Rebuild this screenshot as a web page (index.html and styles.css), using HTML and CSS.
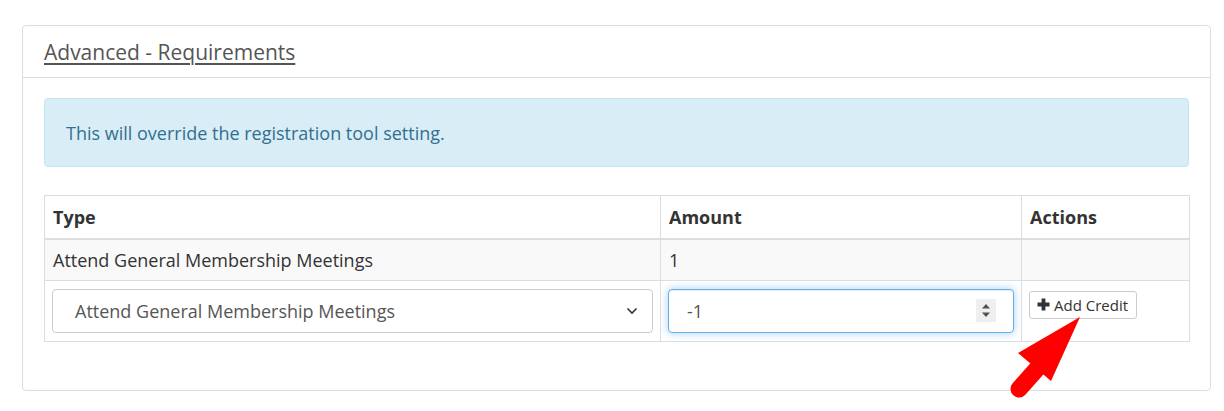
FILE: index.html
```html
<!DOCTYPE html>
<html>
<head>
<meta charset="utf-8">
<link rel="stylesheet" href="styles.css">
</head>
<body>
<div class="panel">
  <div class="panel-heading"><span class="panel-title">Advanced - Requirements</span></div>
  <div class="panel-body">
    <div class="alert">This will override the registration tool setting.</div>
    <table class="grid">
      <colgroup><col class="c-type"><col class="c-amount"><col class="c-actions"></colgroup>
      <thead>
        <tr><th>Type</th><th>Amount</th><th>Actions</th></tr>
      </thead>
      <tbody>
        <tr class="striped"><td>Attend General Membership Meetings</td><td>1</td><td></td></tr>
        <tr class="edit">
          <td>
            <div class="select">
              <span>Attend General Membership Meetings</span>
              <svg class="chev" width="12" height="8" viewBox="0 0 12 8"><path d="M1.5 1.5 L6 6 L10.5 1.5" fill="none" stroke="#333" stroke-width="1.6"/></svg>
            </div>
          </td>
          <td>
            <div class="input focus">
              <span>-1</span>
              <span class="spin">
                <svg width="20" height="23" viewBox="0 0 20 23"><path d="M6 9.5 L10 5 L14 9.5 Z" fill="#505050"/><path d="M6 13.5 L10 18 L14 13.5 Z" fill="#505050"/></svg>
              </span>
            </div>
          </td>
          <td class="act">
            <button class="btn"><svg class="plus" width="13" height="13" viewBox="0 0 13 13"><path d="M4.6 0.5 H8.4 V4.6 H12.5 V8.4 H8.4 V12.5 H4.6 V8.4 H0.5 V4.6 H4.6 Z" fill="#333"/></svg>Add Credit</button>
          </td>
        </tr>
      </tbody>
    </table>
  </div>
</div>
<svg class="arrow" width="90" height="100" viewBox="0 0 90 100">
  <polygon points="70,17 8,53 41,81" fill="#ff0000"/>
  <line x1="9" y1="89" x2="33" y2="62" stroke="#ff0000" stroke-width="17" stroke-linecap="round"/>
</svg>
</body>
</html>
```
FILE: styles.css
```css
html, body {
  margin: 0;
  padding: 0;
  background: #fff;
}
body {
  font-family: "Open Sans", "Noto Sans", sans-serif;
  font-size: 18px;
  color: #333;
  position: relative;
  height: 411px;
  overflow: hidden;
}
.panel {
  margin: 25px 0 0 22px;
  width: 1187px;
  border: 1px solid #ddd;
  border-radius: 4px;
  background: #fff;
}
.panel-heading {
  height: 51px;
  border-bottom: 1px solid #ddd;
  padding: 0 21px;
  display: flex;
  align-items: center;
}
.panel-title {
  font-size: 21px;
  color: #555;
  text-decoration: underline;
  text-underline-offset: 3px;
  text-decoration-thickness: 2px;
}
.panel-body {
  padding: 20px 21px;
}
.alert {
  box-sizing: border-box;
  height: 69px;
  background: #d9edf7;
  border: 1px solid #bce8f1;
  border-radius: 4px;
  color: #31708f;
  padding: 0 21px;
  display: flex;
  align-items: center;
  margin-bottom: 28px;
}
.grid {
  width: 1145px;
  border-collapse: collapse;
  border: 1px solid #ddd;
  margin-bottom: 28px;
  table-layout: fixed;
}
.c-type { width: 616px; }
.c-amount { width: 361px; }
.c-actions { width: 168px; }
.grid th {
  text-align: left;
  font-weight: 700;
  height: 43px;
  box-sizing: border-box;
  padding: 0 8px;
  border: 1px solid #ddd;
  border-bottom: 2px solid #ddd;
}
.grid td {
  border: 1px solid #ddd;
  padding: 0 8px;
  vertical-align: middle;
}
.striped td {
  background: #f9f9f9;
  height: 40px;
}
.edit td {
  height: 44px;
  padding: 8px 7px;
}
.edit td.act {
  vertical-align: top;
  padding: 10px 7px 0 7px;
}
.select {
  height: 44px;
  box-sizing: border-box;
  border: 1px solid #ccc;
  border-radius: 4px;
  display: flex;
  align-items: center;
  justify-content: space-between;
  padding: 0 14px 0 22px;
  color: #555;
  background: #fff;
}
.input {
  height: 44px;
  box-sizing: border-box;
  border: 1px solid #66afe9;
  border-radius: 4px;
  display: flex;
  align-items: center;
  justify-content: space-between;
  padding: 0 17px 0 18px;
  color: #555;
  background: #fff;
  box-shadow: inset 0 1px 1px rgba(0,0,0,.075), 0 0 8px rgba(102,175,233,.6);
}
.spin {
  width: 20px;
  height: 23px;
  background: #efefef;
  display: block;
}
.spin svg { display: block; }
.btn {
  font-family: inherit;
  font-size: 15px;
  color: #333;
  background: #fff;
  border: 1px solid #ccc;
  border-radius: 3px;
  height: 28px;
  padding: 0 8px 0 7px;
  display: flex;
  align-items: center;
  gap: 4px;
}
.plus { display: block; }
.arrow {
  position: absolute;
  left: 1010px;
  top: 300px;
}
```
